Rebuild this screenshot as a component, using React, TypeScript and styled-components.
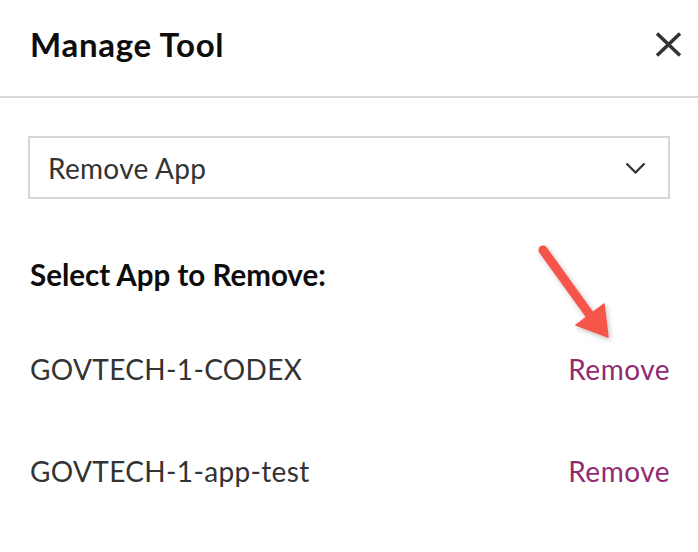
import React from "react";
import styled, { createGlobalStyle } from "styled-components";

const Global = createGlobalStyle`
  html, body { margin: 0; padding: 0; background: #fff; }
  body { font-family: Lato, "Open Sans", sans-serif; color: #333; }
`;

const Panel = styled.div`
  width: 698px;
  height: 552px;
  background: #fff;
  position: relative;
  overflow: hidden;
`;

const Header = styled.div`
  height: 98px;
  border-bottom: 2px solid #d9d9d9;
  display: flex;
  align-items: flex-start;
  justify-content: space-between;
  padding: 24px 16px 0 30px;
  box-sizing: border-box;
`;

const Title = styled.h1`
  margin: 0;
  font-size: 33px;
  line-height: 40px;
  font-weight: 700;
  color: #0d0d0d;
  letter-spacing: 0.7px;
`;

const CloseButton = styled.button`
  border: none;
  background: none;
  padding: 0;
  width: 28px;
  height: 40px;
  display: flex;
  align-items: center;
  justify-content: center;
  cursor: pointer;
`;

const Body = styled.div`
  padding: 38px 28px 0 28px;
  display: flex;
  flex-direction: column;
`;

const Select = styled.div`
  height: 63px;
  border: 2px solid #d6d6d6;
  box-sizing: border-box;
  display: flex;
  align-items: center;
  justify-content: space-between;
  padding: 0 22px 0 18px;
  font-size: 28px;
  letter-spacing: 0.3px;
  color: #333;
`;

const SectionLabel = styled.div`
  margin-top: 58px;
  padding-left: 2px;
  font-size: 29.5px;
  line-height: 36px;
  font-weight: 700;
  color: #0d0d0d;
`;

const List = styled.div`
  margin-top: 59px;
  display: flex;
  flex-direction: column;
  gap: 68px;
`;

const Row = styled.div`
  display: flex;
  align-items: center;
  justify-content: space-between;
  padding-left: 2px;
  font-size: 28px;
  line-height: 34px;
  letter-spacing: 0.35px;
  color: #333;
`;

const RemoveLink = styled.a`
  color: #912a70;
  text-decoration: none;
  letter-spacing: 0.5px;
  cursor: pointer;
`;

const Arrow = styled.svg`
  position: absolute;
  left: 520px;
  top: 230px;
  overflow: visible;
`;

export default function App() {
  const apps = ["GOVTECH-1-CODEX", "GOVTECH-1-app-test"];
  return (
    <>
      <Global />
      <Panel>
        <Header>
          <Title>Manage Tool</Title>
          <CloseButton aria-label="Close">
            <svg width="27" height="25" viewBox="0 0 27 25">
              <path d="M2 1.5 L25 23.5 M25 1.5 L2 23.5" stroke="#333" strokeWidth="3.6" />
            </svg>
          </CloseButton>
        </Header>
        <Body>
          <Select>
            <span>Remove App</span>
            <svg width="21" height="12" viewBox="0 0 21 12">
              <path d="M1.5 1.5 L10.5 10.5 L19.5 1.5" stroke="#333" strokeWidth="2.3" fill="none" />
            </svg>
          </Select>
          <SectionLabel>Select App to Remove:</SectionLabel>
          <List>
            {apps.map((a) => (
              <Row key={a}>
                <span>{a}</span>
                <RemoveLink>Remove</RemoveLink>
              </Row>
            ))}
          </List>
        </Body>
        <Arrow width="178" height="160" viewBox="0 0 178 160">
          <defs>
            <filter id="sh" x="-30%" y="-30%" width="160%" height="160%">
              <feDropShadow dx="1.5" dy="2" stdDeviation="2.5" floodColor="#000" floodOpacity="0.25" />
            </filter>
          </defs>
          <g filter="url(#sh)">
            <path d="M23 20 L72 88" stroke="#f5574a" strokeWidth="9" strokeLinecap="round" />
            <path d="M56 95 L88 107 L84 74 Z" fill="#f5574a" stroke="#f5574a" strokeWidth="1.5" strokeLinejoin="round" />
          </g>
        </Arrow>
      </Panel>
    </>
  );
}
